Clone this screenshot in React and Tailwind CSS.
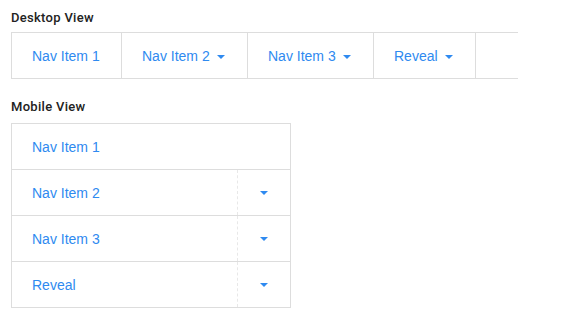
import React from 'react';

const DESKTOP_ITEMS = [
  { label: 'Nav Item 1', width: 'w-[110px]', caret: false },
  { label: 'Nav Item 2', width: 'w-[126px]', caret: true },
  { label: 'Nav Item 3', width: 'w-[126px]', caret: true },
  { label: 'Reveal', width: 'w-[102px]', caret: true },
];

const MOBILE_ITEMS = [
  { label: 'Nav Item 1', caret: false },
  { label: 'Nav Item 2', caret: true },
  { label: 'Nav Item 3', caret: true },
  { label: 'Reveal', caret: true },
];

// Small down-pointing triangle made from borders
function Caret() {
  return (
    <span className="inline-block w-0 h-0 border-t-[4px] border-t-[#2f8af0] border-x-[4px] border-x-transparent" />
  );
}

export default function App() {
  return (
    <div className="bg-white w-[583px] h-[330px] px-[11px] pt-[10px] font-['Liberation_Sans',Arial,sans-serif]">
      <h2 className="text-[13px] font-medium text-[#222] leading-[16px] tracking-[0.3px] font-['Roboto',sans-serif]">
        Desktop View
      </h2>

      {/* Desktop nav: left, top, bottom border; each item has a right border */}
      <div className="mt-[6px] w-[507px] h-[47px] flex border-l border-y border-[#dddddd]">
        {DESKTOP_ITEMS.map(({ label, width, caret }) => (
          <div
            key={label}
            className={`${width} flex items-center pl-[20px] pt-[2px] gap-[7px] border-r border-[#dddddd] text-[14px] text-[#2f8af0]`}>
            <span>{label}</span>
            {caret && <Caret />}
          </div>
        ))}
      </div>

      <h2 className="mt-[20px] text-[13px] font-medium text-[#222] leading-[16px] tracking-[0.3px] font-['Roboto',sans-serif]">
        Mobile View
      </h2>

      {/* Mobile nav: stacked rows with a dashed divider before the toggle */}
      <div className="mt-[8px] w-[280px] border border-[#dddddd]">
        {MOBILE_ITEMS.map(({ label, caret }, i) => (
          <div
            key={label}
            className={`h-[45px] box-content flex ${i > 0 ? 'border-t border-[#dddddd]' : ''}`}>
            <div className="flex-1 flex items-center pl-[20px] pt-[1px] text-[14px] text-[#2f8af0]">
              {label}
            </div>
            {caret && (
              <div className="w-[53px] flex items-center justify-center border-l border-dashed border-[#e8e8e8]">
                <Caret />
              </div>
            )}
          </div>
        ))}
      </div>
    </div>
  );
}
